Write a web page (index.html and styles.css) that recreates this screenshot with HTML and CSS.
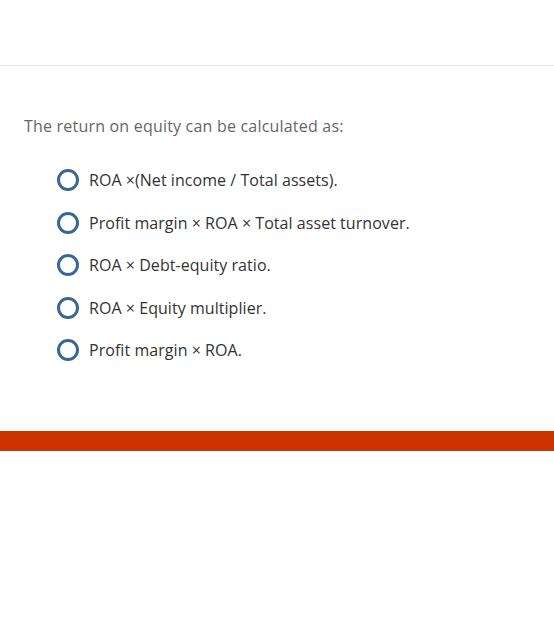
FILE: index.html
```html
<!DOCTYPE html>
<html>
<head>
<meta charset="utf-8">
<link rel="stylesheet" href="styles.css">
</head>
<body>
<div class="header"></div>
<div class="content">
  <p class="question">The return on equity can be calculated as:</p>
  <ul class="options">
    <li class="option"><span class="radio"></span><span class="label">ROA ×(Net income / Total assets).</span></li>
    <li class="option"><span class="radio"></span><span class="label">Profit margin × ROA × Total asset turnover.</span></li>
    <li class="option"><span class="radio"></span><span class="label">ROA × Debt-equity ratio.</span></li>
    <li class="option"><span class="radio"></span><span class="label">ROA × Equity multiplier.</span></li>
    <li class="option"><span class="radio"></span><span class="label">Profit margin × ROA.</span></li>
  </ul>
</div>
<div class="bar"></div>
</body>
</html>
```
FILE: styles.css
```css
html, body {
  margin: 0;
  padding: 0;
  background: #fff;
  font-family: "Open Sans", Lato, sans-serif;
}
.header {
  height: 65px;
  border-bottom: 1px solid #e8e8e8;
}
.content {
  padding: 49px 24px 0 24px;
  height: 316px;
}
.question {
  margin: 0;
  font-size: 16px;
  line-height: 22px;
  color: #666;
  letter-spacing: 0.2px;
}
.options {
  list-style: none;
  margin: 32px 0 0 0;
  padding: 0 0 0 33px;
  display: flex;
  flex-direction: column;
  gap: 20.5px;
}
.option {
  display: flex;
  align-items: center;
  gap: 10px;
  height: 22px;
}
.radio {
  width: 16px;
  height: 16px;
  border: 3px solid #376698;
  border-radius: 50%;
  flex: none;
}
.label {
  font-size: 16px;
  line-height: 22px;
  color: #333;
  letter-spacing: 0.05px;
}
.bar {
  height: 20px;
  background: #cc3300;
}
```
